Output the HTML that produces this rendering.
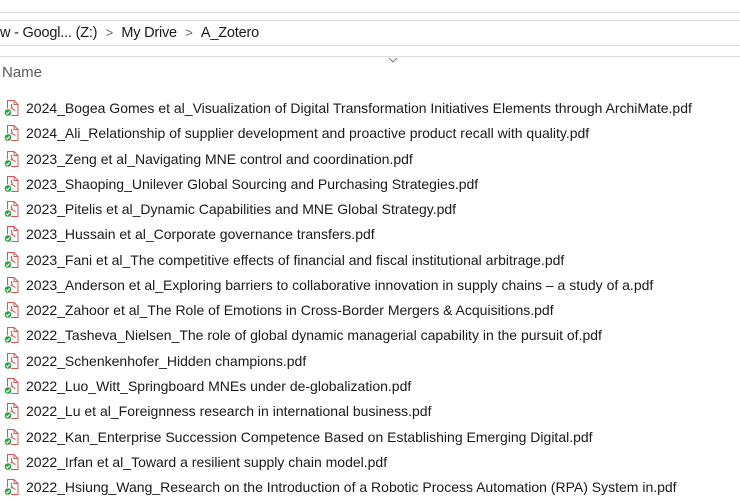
<!DOCTYPE html>
<html><head><style>
body{margin:0;width:740px;height:501px;background:#fff;overflow:hidden;position:relative;font-family:"Liberation Sans",sans-serif;color:#1a1a1a}
.l{position:absolute;left:0;width:740px;height:1px;background:#dcdcdc}
.addr{position:absolute;top:24px;left:0;font-size:14.5px;line-height:18px;color:#1a1a1a;white-space:nowrap;letter-spacing:-0.2px}
.addr span.s{display:inline-block;width:24px;text-align:center;color:#666;font-size:13px}
.name{position:absolute;top:64px;left:2px;font-size:15px;color:#5a5a5a}
.row{position:absolute;left:0;height:20px;line-height:20px;font-size:14px;white-space:nowrap}
.row svg{position:absolute;left:3px;top:1px}
.row span{position:absolute;left:26px;top:0;letter-spacing:0px}
</style></head><body>
<div class="l" style="top:12px"></div>
<div class="l" style="top:20px"></div>
<div class="l" style="top:45px"></div>
<div class="l" style="top:56px"></div>
<svg style="position:absolute;left:388px;top:57px" width="10" height="6"><path d="M1 1 L5 5 L9 1" stroke="#777" fill="none"/></svg>
<div class="addr">w - Googl... (Z:)<span class="s">&gt;</span>My Drive<span class="s">&gt;</span>A_Zotero</div>
<div class="name">Name</div>
<div id="rows"></div>
<script>
var f=["2024_Bogea Gomes et al_Visualization of Digital Transformation Initiatives Elements through ArchiMate.pdf","2024_Ali_Relationship of supplier development and proactive product recall with quality.pdf","2023_Zeng et al_Navigating MNE control and coordination.pdf","2023_Shaoping_Unilever Global Sourcing and Purchasing Strategies.pdf","2023_Pitelis et al_Dynamic Capabilities and MNE Global Strategy.pdf","2023_Hussain et al_Corporate governance transfers.pdf","2023_Fani et al_The competitive effects of financial and fiscal institutional arbitrage.pdf","2023_Anderson et al_Exploring barriers to collaborative innovation in supply chains – a study of a.pdf","2022_Zahoor et al_The Role of Emotions in Cross-Border Mergers & Acquisitions.pdf","2022_Tasheva_Nielsen_The role of global dynamic managerial capability in the pursuit of.pdf","2022_Schenkenhofer_Hidden champions.pdf","2022_Luo_Witt_Springboard MNEs under de-globalization.pdf","2022_Lu et al_Foreignness research in international business.pdf","2022_Kan_Enterprise Succession Competence Based on Establishing Emerging Digital.pdf","2022_Irfan et al_Toward a resilient supply chain model.pdf","2022_Hsiung_Wang_Research on the Introduction of a Robotic Process Automation (RPA) System in.pdf"];
var ic='<svg width="18" height="18" viewBox="0 0 18 18"><path d="M4.5 1.5 H11 L15 5.5 V16.5 H4.5 Z" fill="#fff" stroke="#d9534f"/><path d="M11 1.5 V5.5 H15" fill="none" stroke="#d9534f"/><path d="M8.5 5 C8.5 9 9.5 10.5 12.5 11.5 M8.5 9 L7 11.5" stroke="#d9534f" fill="none" stroke-width="1.1"/><circle cx="5" cy="13.5" r="3.8" fill="#2e9e45" stroke="#fff"/><path d="M3.2 13.6 L4.5 14.9 L6.8 12.4" stroke="#fff" fill="none" stroke-width="1.1"/></svg>';
var h='';f.forEach(function(t,i){var s=t.replace(/&/g,'&amp;');h+='<div class="row" style="top:'+(98+i*25.27).toFixed(1)+'px">'+ic+'<span>'+s+'</span></div>';});
document.getElementById('rows').innerHTML=h;
</script>
</body></html>
